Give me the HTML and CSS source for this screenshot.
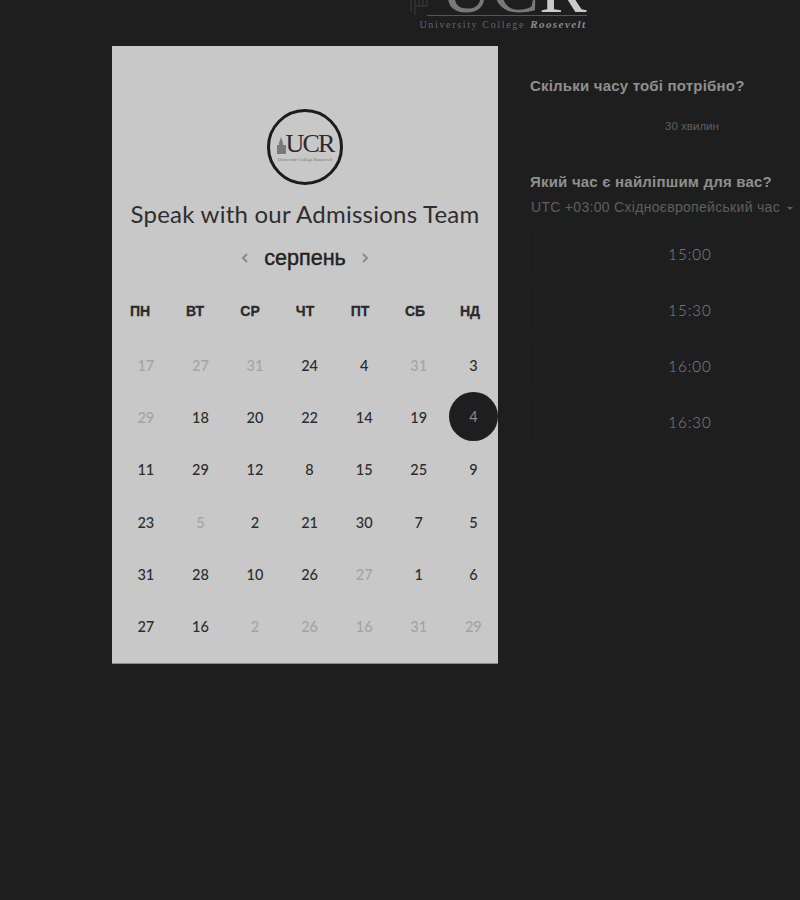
FILE: index.html
```html
<!DOCTYPE html>
<html>
<head>
    <meta charset="UTF-8">
    <meta name="viewport" content="width=device-width, initial-scale=1">
    <title>Speak with our Admissions Team</title>
    <link rel="stylesheet" href="styles.css">
</head>
<body>
    <header id="topbar">
        <div class="brand">
            <svg class="brand-tower" width="24" height="16" viewBox="0 0 24 16" fill="none" stroke="#3c3c3c" stroke-width="1">
                <path d="M2 0V12M6 0V15M10 0V6M14 0V6M18 0V6M6 6H18"/>
            </svg>
            <div class="brand-mark"><span class="brand-uc">UC</span><span class="brand-r">R</span></div>
            <div class="brand-name">University College <em>Roosevelt</em></div>
        </div>
    </header>
    <main id="page">
        <section id="card">
            <div class="badge">
                <svg class="badge-tower" width="9" height="17" viewBox="0 0 9 17" fill="#7a7a7a">
                    <path d="M4 0L6 6V8H9V17H0V8H2V6Z"/>
                </svg>
                <div class="badge-mark">UCR</div>
                <div class="badge-name">University College Roosevelt</div>
            </div>
            <h1>Speak with our Admissions Team</h1>
            <div class="month">
                <svg width="8" height="12" viewBox="0 0 8 12" fill="none" stroke="#8a8a8a" stroke-width="2"><path d="M6 2L2 6L6 10"/></svg>
                <span>серпень</span>
                <svg width="8" height="12" viewBox="0 0 8 12" fill="none" stroke="#8a8a8a" stroke-width="2"><path d="M2 2L6 6L2 10"/></svg>
            </div>
            <div class="weekdays">
                <span>ПН</span><span>ВТ</span><span>СР</span><span>ЧТ</span><span>ПТ</span><span>СБ</span><span>НД</span>
            </div>
            <div class="days">
                <span class="off">17</span><span class="off">27</span><span class="off">31</span><span>24</span><span>4</span><span class="off">31</span><span>3</span>
                <span class="off">29</span><span>18</span><span>20</span><span>22</span><span>14</span><span>19</span><span class="picked"><b>4</b></span>
                <span>11</span><span>29</span><span>12</span><span>8</span><span>15</span><span>25</span><span>9</span>
                <span>23</span><span class="off">5</span><span>2</span><span>21</span><span>30</span><span>7</span><span>5</span>
                <span>31</span><span>28</span><span>10</span><span>26</span><span class="off">27</span><span>1</span><span>6</span>
                <span>27</span><span>16</span><span class="off">2</span><span class="off">26</span><span class="off">16</span><span class="off">31</span><span class="off">29</span>
            </div>
        </section>
        <section id="side">
            <h2>Скільки часу тобі потрібно?</h2>
            <div class="duration">30 хвилин</div>
            <h2 class="when">Який час є найліпшим для вас?</h2>
            <div class="zone">UTC +03:00 Східноєвропейський час <i class="caret"></i></div>
            <div class="slots">
                <button>15:00</button>
                <button>15:30</button>
                <button>16:00</button>
                <button>16:30</button>
            </div>
        </section>
    </main>
</body>
</html>
```

FILE: styles.css
```css
html, body {
    height: 100%;
}
body {
    margin: 0;
    background-color: #1e1e1e;
    font-family: "Liberation Sans", Arial, sans-serif;
    overflow: hidden;
}

#topbar {
    height: 46px;
    overflow: hidden;
    display: flex;
    justify-content: center;
}
.brand {
    position: relative;
    width: 178px;
    margin-left: 195px;
    height: 46px;
}
.brand-tower {
    position: absolute;
    left: 0;
    top: 0;
}
.brand-mark {
    position: absolute;
    left: 18px;
    top: -44px;
    height: 59px;
    padding-left: 14px;
    font-family: "Liberation Serif", serif;
    font-size: 71px;
    line-height: 64px;
    white-space: nowrap;
    border-bottom: 1px solid #555;
}
.brand-uc {
    color: #787878;
}
.brand-r {
    color: #cacaca;
}
.brand-name {
    position: absolute;
    left: 11px;
    top: 17px;
    font-family: "Liberation Serif", serif;
    font-size: 10px;
    line-height: 14px;
    letter-spacing: 1.65px;
    color: #666;
    white-space: nowrap;
}
.brand-name em {
    color: #8c8c8c;
    letter-spacing: 1.45px;
    font-size: 11px;
    font-weight: bold;
    margin-left: 1px;
}

#page {
    display: flex;
    gap: 32px;
    padding-left: 112px;
}

#card {
    box-sizing: border-box;
    width: 386px;
    height: 618px;
    background-color: #c8c8c8;
    padding-top: 63px;
    border-bottom: 1px solid #8a8a8a;
}
.badge {
    box-sizing: border-box;
    position: relative;
    width: 76px;
    height: 76px;
    margin: 0 auto;
    border: 3px solid #1c1c1c;
    border-radius: 50%;
    text-align: center;
}
.badge-tower {
    position: absolute;
    left: 7px;
    top: 25px;
}
.badge-mark {
    margin-top: 19px;
    padding-left: 9px;
    font-family: "Liberation Serif", serif;
    font-size: 26px;
    line-height: 26px;
    letter-spacing: -1.8px;
    color: #2a2a2a;
}
.badge-name {
    font-family: "Liberation Serif", serif;
    font-size: 4.5px;
    line-height: 5px;
    letter-spacing: 0.05px;
    color: #707070;
    white-space: nowrap;
}
h1 {
    margin: 14px 0 0;
    font-family: Lato, sans-serif;
    font-weight: 400;
    font-size: 24px;
    line-height: 30px;
    letter-spacing: 0.24px;
    text-align: center;
    color: #2e2e2e;
    white-space: nowrap;
}
.month {
    display: flex;
    justify-content: center;
    align-items: center;
    gap: 15px;
    height: 30px;
    margin-top: 14px;
    font-size: 21.6px;
    color: #222;
    -webkit-text-stroke: 0.4px #222;
}
.weekdays {
    display: grid;
    grid-template-columns: repeat(7, 55px);
    margin-top: 28px;
    padding-left: 0.5px;
    font-size: 14px;
    font-weight: bold;
    line-height: 20px;
    text-align: center;
    color: #2a2a2a;
    -webkit-text-stroke: 0.3px #2a2a2a;
}
.days {
    display: grid;
    grid-template-columns: repeat(7, 54.6px);
    grid-auto-rows: 52.3px;
    width: 382px;
    margin: 18px 0 0 6.5px;
    font-family: Lato, sans-serif;
    font-size: 14.5px;
    font-weight: 500;
    color: #2c2c2c;
}
.days span {
    display: flex;
    justify-content: center;
    align-items: center;
}
.days .off {
    color: #a4a4a4;
}
.days .picked b {
    display: flex;
    justify-content: center;
    align-items: center;
    flex: none;
    width: 49px;
    height: 49px;
    margin-top: -2px;
    border-radius: 50%;
    background-color: #1e1e1e;
    color: #8c8c8c;
    font-weight: 400;
}

#side {
    width: 270px;
    padding-top: 30px;
}
h2 {
    margin: 0;
    font-size: 15px;
    font-weight: bold;
    line-height: 20px;
    letter-spacing: 0.2px;
    color: #8f8f8f;
    white-space: nowrap;
}
.duration {
    box-sizing: border-box;
    width: 310px;
    height: 32px;
    margin: 14px 0 0 7px;
    border: 1px solid #212121;
    font-size: 11.5px;
    line-height: 30px;
    text-align: center;
    color: #5e5e5e;
}
.when {
    margin-top: 30px;
}
.zone {
    margin-top: 6px;
    margin-left: 1px;
    font-size: 14px;
    line-height: 18px;
    letter-spacing: 0.3px;
    color: #5f5f5f;
    white-space: nowrap;
}
.caret {
    display: inline-block;
    width: 0;
    height: 0;
    margin-left: 3px;
    vertical-align: 2px;
    border-left: 3px solid transparent;
    border-right: 3px solid transparent;
    border-top: 3px solid #5f5f5f;
}
.slots {
    display: flex;
    flex-direction: column;
    gap: 8px;
    margin-top: 14px;
    margin-left: 5px;
}
.slots button {
    width: 310px;
    height: 48px;
    padding: 0;
    background: none;
    border: 1px solid #212121;
    font-family: Lato, sans-serif;
    font-size: 15px;
    font-weight: 300;
    letter-spacing: 1px;
    color: #848484;
}
```
